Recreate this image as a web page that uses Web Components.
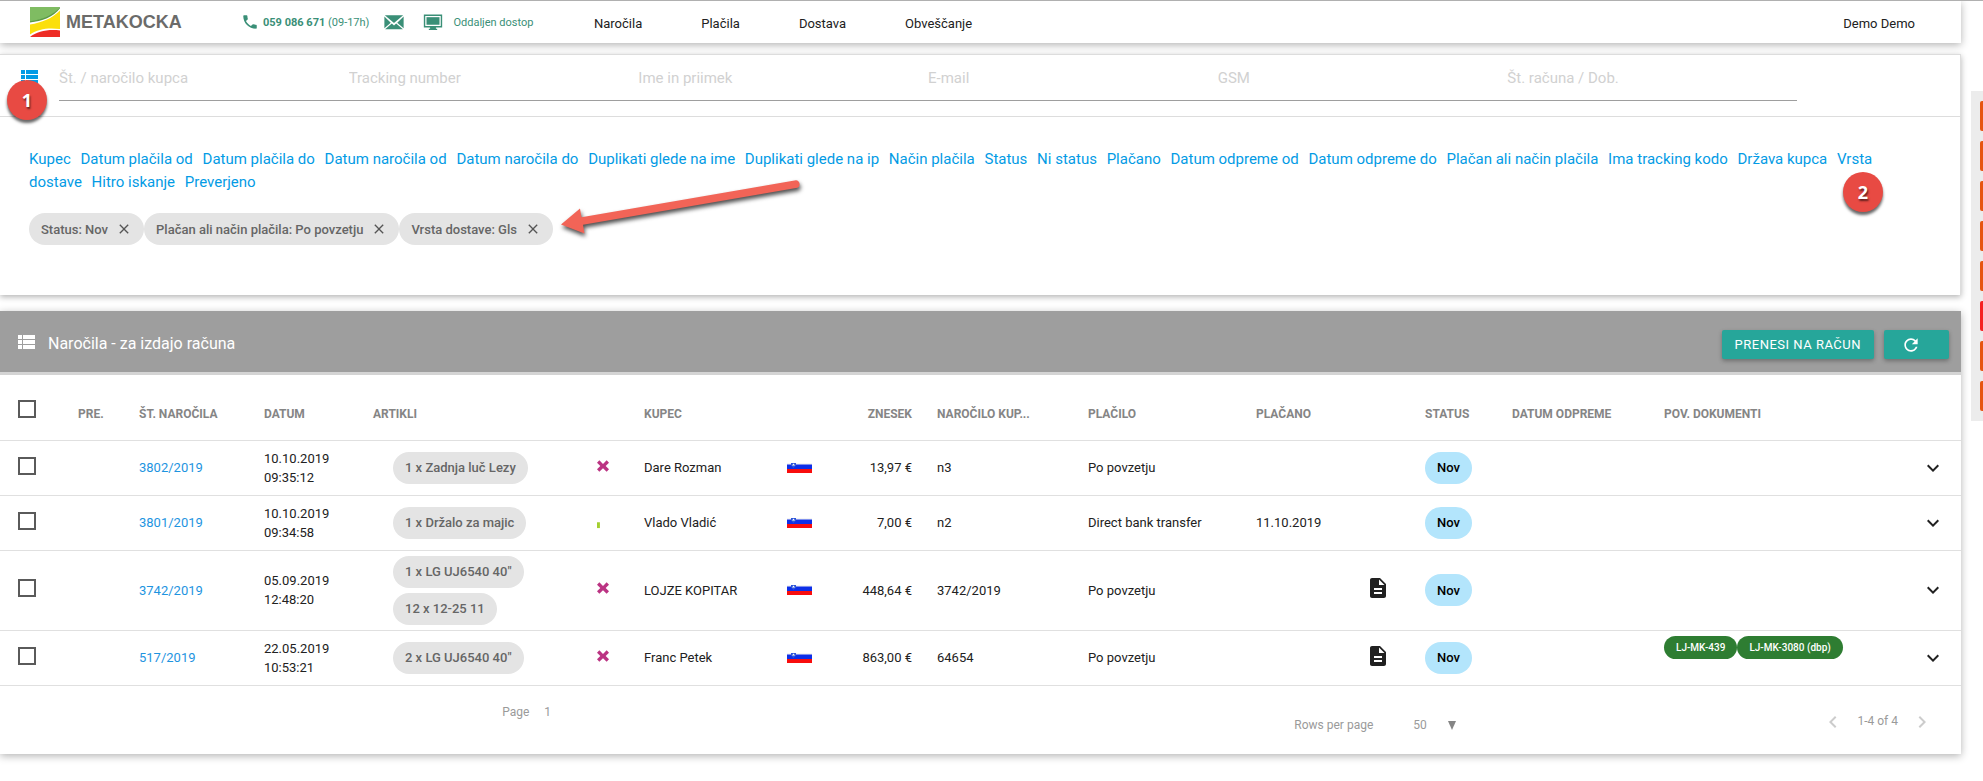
<!DOCTYPE html>
<html lang="sl">
<head>
<meta charset="utf-8">
<title>Metakocka - Naročila</title>
<style>
    body {
        margin: 0;
        background: #fff;
        color: #212121;
        font: 13px/19px Roboto, "Liberation Sans", sans-serif;
    }
</style>
</head>
<body>
<mk-app></mk-app>

<script>
const ICONS = {
    list: '<path d="M4 14h4v-4H4v4zm0 5h4v-4H4v4zM4 9h4V5H4v4zm5 5h12v-4H9v4zm0 5h12v-4H9v4zM9 5v4h12V5H9z"/>',
    phone: '<path d="M6.62 10.79c1.44 2.83 3.76 5.14 6.59 6.59l2.2-2.2c.27-.27.67-.36 1.02-.24 1.12.37 2.33.57 3.57.57.55 0 1 .45 1 1V20c0 .55-.45 1-1 1-9.39 0-17-7.61-17-17 0-.55.45-1 1-1h3.5c.55 0 1 .45 1 1 0 1.25.2 2.45.57 3.57.11.35.03.74-.25 1.02l-2.2 2.2z"/>',
    mail: '<path d="M2 4.500h20L12 13zM1.500 6l7 6.700-7 6zM22.500 6v12.700l-7-6zM9.600 13.700L12 15.800l2.400-2.100 7.300 6.300H2.300z"/>',
    monitor: '<path d="M1 3h22v15.500h-7.500V20H17v1.500H7V20h1.500v-1.500H1zM2.700 4.700v12.100h18.600V4.700z" fill-rule="evenodd"/><path d="M4.200 6.200h15.600v9.100H4.200z"/>',
    close: '<path d="M19 6.410L17.590 5 12 10.590 6.410 5 5 6.410 10.590 12 5 17.590 6.410 19 12 13.410 17.590 19 19 17.590 13.410 12z"/>',
    refresh: '<path d="M17.650 6.350C16.200 4.900 14.210 4 12 4c-4.420 0-7.990 3.580-7.990 8s3.570 8 7.990 8c3.730 0 6.840-2.550 7.730-6h-2.080c-.82 2.330-3.040 4-5.650 4-3.310 0-6-2.690-6-6s2.690-6 6-6c1.660 0 3.140.69 4.220 1.780L13 11h7V4l-2.350 2.350z"/>',
    cross: '<path d="M6.500 3.500L12 9l5.500-5.500L21 7l-5 5 5 5-3.500 3.500-5.500-5.300-5.500 5.300L3 17l5-5-5-5z"/>',
    bar: '<path d="M0 9h5v10H0z"/>',
    document: '<path d="M14 2H6c-1.100 0-1.990.9-1.990 2L4 20c0 1.100.89 2 1.990 2H18c1.100 0 2-.9 2-2V8l-6-6zm2 16H8v-2h8v2zm0-4H8v-2h8v2zm-3-5V3.500L18.500 9H13z"/>',
    down: '<path d="M16.590 8.590L12 13.170 7.410 8.590 6 10l6 6 6-6z"/>',
    left: '<path d="M15.410 7.410L14 6l-6 6 6 6 1.410-1.410L10.830 12z"/>',
    right: '<path d="M10 6L8.590 7.410 13.170 12l-4.580 4.590L10 18l6-6z"/>'
};

const FILTERS = ['Kupec', 'Datum plačila od', 'Datum plačila do', 'Datum naročila od', 'Datum naročila do',
    'Duplikati glede na ime', 'Duplikati glede na ip', 'Način plačila', 'Status', 'Ni status', 'Plačano',
    'Datum odpreme od', 'Datum odpreme do', 'Plačan ali način plačila', 'Ima tracking kodo', 'Država kupca',
    'Vrsta dostave', 'Hitro iskanje', 'Preverjeno'];

const ORDERS = [
    { no: '3802/2019', date: '10.10.2019', time: '09:35:12', items: ['1 x Zadnja luč Lezy'], stock: 'cross',
      buyer: 'Dare Rozman', sum: '13,97 €', ref: 'n3', pay: 'Po povzetju', paid: '', doc: false, links: [] },
    { no: '3801/2019', date: '10.10.2019', time: '09:34:58', items: ['1 x Držalo za majic'], stock: 'bar',
      buyer: 'Vlado Vladić', sum: '7,00 €', ref: 'n2', pay: 'Direct bank transfer', paid: '11.10.2019', doc: false, links: [] },
    { no: '3742/2019', date: '05.09.2019', time: '12:48:20', items: ['1 x LG UJ6540 40"', '12 x 12-25 11'], stock: 'cross',
      buyer: 'LOJZE KOPITAR', sum: '448,64 €', ref: '3742/2019', pay: 'Po povzetju', paid: '', doc: true, links: [] },
    { no: '517/2019', date: '22.05.2019', time: '10:53:21', items: ['2 x LG UJ6540 40"'], stock: 'cross',
      buyer: 'Franc Petek', sum: '863,00 €', ref: '64654', pay: 'Po povzetju', paid: '', doc: true,
      links: ['LJ-MK-439', 'LJ-MK-3080 (dbp)'] }
];

class MkIcon extends HTMLElement {
    connectedCallback() {
        this.attachShadow({ mode: 'open' }).innerHTML = `
            <style>
                :host { display: inline-block; width: 24px; height: 24px; flex: none; }
                svg { display: block; width: 100%; height: 100%; fill: currentColor; }
            </style>
            <svg viewBox="0 0 24 24" aria-hidden="true">${ICONS[this.getAttribute('name')]}</svg>
        `;
    }
}
customElements.define('mk-icon', MkIcon);


class MkChip extends HTMLElement {
    connectedCallback() {
        const closable = this.hasAttribute('closable');
        this.attachShadow({ mode: 'open' }).innerHTML = `
            <style>
                :host {
                    display: inline-flex;
                    align-items: center;
                    gap: 8px;
                    box-sizing: border-box;
                    height: 32px;
                    padding: 0 12px;
                    border-radius: 16px;
                    background: #e4e4e4;
                    color: #666;
                    font-weight: 500;
                    white-space: nowrap;
                }
                :host([kind="status"]) {
                    background: #b3e5fc;
                    color: #000;
                }
                :host([kind="doc"]) {
                    height: 23px;
                    border-radius: 12px;
                    background: #2e7d32;
                    color: #fff;
                    font-size: 10px;
                }
                button {
                    display: flex;
                    padding: 0;
                    border: 0;
                    background: none;
                    color: #555;
                    cursor: pointer;
                }
                mk-icon { width: 16px; height: 16px; }
            </style>
            <slot></slot>
            ${closable ? '<button aria-label="Odstrani"><mk-icon name="close"></mk-icon></button>' : ''}
        `;
        if (closable) {
            this.shadowRoot.querySelector('button').onclick = () => this.remove();
        }
    }
}
customElements.define('mk-chip', MkChip);


class MkTopbar extends HTMLElement {
    connectedCallback() {
        this.attachShadow({ mode: 'open' }).innerHTML = `
            <style>
                :host {
                    display: flex;
                    align-items: center;
                    box-sizing: border-box;
                    height: 42px;
                    padding: 0 46px 0 30px;
                    background: #fff;
                    box-shadow: 0 2px 8px rgba(0, 0, 0, 0.3);
                }
                a { color: inherit; text-decoration: none; }
                .brand {
                    display: flex;
                    align-items: center;
                    gap: 6px;
                    width: 211px;
                    color: #6b6b6a;
                    font: bold 18px/30px "Liberation Sans", sans-serif;
                }
                .brand svg { width: 30px; height: 30px; }
                .contact {
                    display: flex;
                    align-items: center;
                    width: 353px;
                    color: #3a8f77;
                    font-size: 11px;
                }
                .contact a { display: flex; align-items: center; }
                .contact b { font-weight: 700; }
                .phone { gap: 4px; margin-right: 14px; }
                .mail { margin-right: 18px; }
                .remote { gap: 10px; }
                .phone mk-icon { width: 18px; height: 18px; }
                .mail mk-icon { width: 22px; height: 22px; }
                .remote mk-icon { width: 20px; height: 20px; }
                nav { display: flex; flex: 1; gap: 59px; }
                nav, .user { padding-top: 3px; }
            </style>
            <a class="brand" href="#">
                <svg viewBox="0 0 30 30" aria-hidden="true">
                    <path d="M0 0h30C24 9 12 13 0 15z" fill="#7fbc62"/>
                    <path d="M0 14.200C12 12.500 23 8.500 30 0v1.200C23.500 10 12 14 0 15.500z" fill="#5a9a45"/>
                    <path d="M0 17.500c12-2 22-6 30-14v18.500C18 20.500 8 22 0 27.500z" fill="#fbdf0b"/>
                    <path d="M0 30c7-5.500 18-8 30-6.500V30z" fill="#ee2d26"/>
                </svg>
                METAKOCKA
            </a>
            <div class="contact">
                <a class="phone" href="tel:059086671"><mk-icon name="phone"></mk-icon><span><b>059 086 671</b> (09-17h)</span></a>
                <a class="mail" href="#" aria-label="E-pošta"><mk-icon name="mail"></mk-icon></a>
                <a class="remote" href="#"><mk-icon name="monitor"></mk-icon>Oddaljen dostop</a>
            </div>
            <nav>
                <a href="#">Naročila</a>
                <a href="#">Plačila</a>
                <a href="#">Dostava</a>
                <a href="#">Obveščanje</a>
            </nav>
            <a class="user" href="#">Demo Demo</a>
        `;
    }
}
customElements.define('mk-topbar', MkTopbar);


class MkFilter extends HTMLElement {
    connectedCallback() {
        const fields = ['Št. / naročilo kupca', 'Tracking number', 'Ime in priimek', 'E-mail', 'GSM', 'Št. računa / Dob.'];
        this.attachShadow({ mode: 'open' }).innerHTML = `
            <style>
                :host {
                    display: block;
                    box-sizing: border-box;
                    min-height: 241px;
                    border: solid #ddd;
                    border-width: 1px 1px 0 0;
                    background: #fff;
                    box-shadow: 0 2px 6px rgba(0, 0, 0, 0.3);
                }
                form {
                    display: flex;
                    align-items: flex-start;
                    gap: 18px;
                    padding: 10px 163px 15px 17px;
                    border-bottom: 1px solid #ddd;
                    color: #039be5;
                }
                .fields {
                    display: flex;
                    flex: 1;
                    border-bottom: 1px solid #9e9e9e;
                }
                input {
                    flex: 1;
                    min-width: 0;
                    height: 35px;
                    padding: 0 0 10px;
                    box-sizing: border-box;
                    border: 0;
                    outline: 0;
                    background: none;
                    font: 15px Roboto, sans-serif;
                }
                input::placeholder { color: #d1d1d1; }
                .links {
                    padding: 31px 60px 0 29px;
                    font-size: 15px;
                    line-height: 23px;
                }
                .links a {
                    margin-right: 6px;
                    color: #039be5;
                    text-decoration: none;
                }
                .chips {
                    display: flex;
                    padding: 19px 29px;
                }
            </style>
            <form>
                <mk-icon name="list"></mk-icon>
                <div class="fields">
                    ${fields.map(f => `<input type="text" placeholder="${f}" aria-label="${f}">`).join('')}
                </div>
            </form>
            <div class="links">${FILTERS.map(f => `<a href="#">${f}</a>`).join(' ')}</div>
            <div class="chips"><slot></slot></div>
        `;
    }
}
customElements.define('mk-filter', MkFilter);


class MkOrders extends HTMLElement {
    connectedCallback() {
        const rows = ORDERS.map(o => `
            <tr>
                <td class="pick"><input type="checkbox" aria-label="Izberi ${o.no}"></td>
                <td></td>
                <td><a href="#">${o.no}</a></td>
                <td>${o.date}<br>${o.time}</td>
                <td><div class="items">${o.items.map(i => `<mk-chip>${i}</mk-chip>`).join('')}</div></td>
                <td><mk-icon class="${o.stock}" name="${o.stock}"></mk-icon></td>
                <td>${o.buyer}</td>
                <td>
                    <svg class="flag" viewBox="0 0 25 12" role="img" aria-label="Slovenija">
                        <path d="M0 1h25v3H0z" fill="#f4f4f4"/>
                        <path d="M0 2.500h25V7H0z" fill="#0d2fe8"/>
                        <path d="M0 7h25v4H0z" fill="#f80d0d"/>
                        <path d="M4 1h5v2.500L6.500 6 4 3.500z" fill="#2d55d8"/>
                        <path d="M5 3.500l1.500-2L8 3.500z" fill="#fff"/>
                    </svg>
                </td>
                <td class="sum">${o.sum}</td>
                <td>${o.ref}</td>
                <td>${o.pay}</td>
                <td>${o.paid}</td>
                <td>${o.doc ? '<mk-icon class="doc" name="document"></mk-icon>' : ''}</td>
                <td><mk-chip kind="status">Nov</mk-chip></td>
                <td></td>
                <td class="links"><div>${o.links.map(l => `<mk-chip kind="doc">${l}</mk-chip>`).join('')}</div></td>
                <td><button class="more" aria-label="Več"><mk-icon name="down"></mk-icon></button></td>
            </tr>
        `).join('');

        const widths = [78, 61, 125, 109, 224, 47, 143, 53, 97, 151, 168, 114, 55, 87, 152, 257, 40];
        const heads = ['PRE.', 'ŠT. NAROČILA', 'DATUM', 'ARTIKLI', '', 'KUPEC', '', 'ZNESEK', 'NAROČILO KUP...',
            'PLAČILO', 'PLAČANO', '', 'STATUS', 'DATUM ODPREME', 'POV. DOKUMENTI', ''];

        this.attachShadow({ mode: 'open' }).innerHTML = `
            <style>
                :host {
                    display: block;
                    background: #fff;
                    box-shadow: 0 2px 8px rgba(0, 0, 0, 0.3);
                }
                header {
                    display: flex;
                    align-items: center;
                    gap: 10px;
                    height: 61px;
                    padding: 0 12px 0 14px;
                    border-bottom: 3px solid #d4d4d4;
                    background: #9e9e9e;
                    color: #fff;
                }
                h1 {
                    flex: 1;
                    margin: 0;
                    padding-top: 3px;
                    font-size: 16px;
                    font-weight: 400;
                }
                header button {
                    display: flex;
                    align-items: center;
                    height: 29px;
                    margin-top: 6px;
                    padding: 0 13px;
                    border: 0;
                    border-radius: 2px;
                    background: #26a69a;
                    box-shadow: 0 2px 4px rgba(0, 0, 0, 0.3);
                    color: #fff;
                    font: 13px Roboto, sans-serif;
                    letter-spacing: 0.5px;
                    cursor: pointer;
                }
                header .refresh { padding: 0 28px 0 17px; }
                .refresh mk-icon { width: 20px; height: 20px; }
                table {
                    width: 100%;
                    table-layout: fixed;
                    border-collapse: collapse;
                }
                th, td { box-sizing: border-box; }
                th {
                    height: 65px;
                    padding: 14px 0 0;
                    color: #858585;
                    font-size: 12px;
                    font-weight: 700;
                    text-align: left;
                    white-space: nowrap;
                }
                td {
                    height: 55px;
                    padding: 0;
                }
                tr { border-bottom: 1px solid #e0e0e0; }
                td a { color: #1e94df; text-decoration: none; }
                th.pick { padding: 4px 0 0 18px; }
                td.pick { padding: 0 0 4px 18px; }
                input[type="checkbox"] {
                    display: block;
                    appearance: none;
                    width: 18px;
                    height: 18px;
                    margin: 0;
                    border: 2px solid #5a5a5a;
                }
                input[type="checkbox"]:checked { background: #26a69a; }
                .sum { padding-right: 25px; text-align: right; }
                .items {
                    display: flex;
                    flex-direction: column;
                    align-items: flex-start;
                    gap: 5px;
                    padding: 5px 0 5px 20px;
                }
                td mk-icon, td mk-chip { vertical-align: middle; }
                .cross { width: 16px; height: 16px; margin: 0 0 4px -2px; color: #bb3483; }
                .bar { width: 14px; height: 14px; color: #a4cf30; }
                .flag { display: block; width: 25px; height: 12px; }
                .doc { margin: 0 0 4px -4px; }
                .links { vertical-align: top; }
                .links div { display: flex; padding-top: 5px; }
                .more {
                    display: flex;
                    padding: 0;
                    border: 0;
                    background: none;
                    color: #212121;
                    cursor: pointer;
                }
                footer {
                    display: grid;
                    grid-template-columns: 502fr 792fr 527fr auto;
                    align-items: center;
                    height: 68px;
                    padding-right: 27px;
                    color: #9a9a9a;
                    font-size: 12px;
                }
                footer div, footer label { display: flex; align-items: center; }
                footer select, footer input {
                    padding: 0;
                    border: 0;
                    appearance: none;
                    background: none;
                    color: inherit;
                    font: inherit;
                }
                .page { grid-column: 2; gap: 15px; padding-bottom: 14px; }
                .page input { width: 24px; }
                .size { gap: 40px; padding-top: 12px; }
                .size span { display: flex; align-items: center; }
                .size select { width: 43px; margin-right: -8px; padding-right: 22px; }
                .size i {
                    border: solid transparent;
                    border-width: 9px 4px 0;
                    border-top-color: #858585;
                    pointer-events: none;
                }
                .range { gap: 12px; padding-top: 4px; }
                .range button { display: flex; padding: 0; border: 0; background: none; color: #ccc; }
            </style>
            <header>
                <mk-icon name="list"></mk-icon>
                <h1>Naročila - za izdajo računa</h1>
                <button>PRENESI NA RAČUN</button>
                <button class="refresh" aria-label="Osveži"><mk-icon name="refresh"></mk-icon></button>
            </header>
            <table>
                <colgroup>${widths.map(w => `<col style="width: ${w}px">`).join('')}</colgroup>
                <thead>
                    <tr>
                        <th class="pick"><input type="checkbox" aria-label="Izberi vse"></th>
                        ${heads.map(h => `<th${h === 'ZNESEK' ? ' class="sum"' : ''}>${h}</th>`).join('')}
                    </tr>
                </thead>
                <tbody>${rows}</tbody>
            </table>
            <footer>
                <label class="page">Page <input type="text" value="1"></label>
                <label class="size">Rows per page <span><select><option>50</option></select><i></i></span></label>
                <div class="range">
                    <button aria-label="Nazaj"><mk-icon name="left"></mk-icon></button>
                    <span>1-4 of 4</span>
                    <button aria-label="Naprej"><mk-icon name="right"></mk-icon></button>
                </div>
            </footer>
        `;
    }
}
customElements.define('mk-orders', MkOrders);


// Colored tabs cut off by the right edge of the window
class MkRail extends HTMLElement {
    connectedCallback() {
        const colors = ['#e65512', '#e65512', '#e65512', '#e65512', '#e65512', '#f52222', '#e65512', '#e65512'];
        this.attachShadow({ mode: 'open' }).innerHTML = `
            <style>
                :host {
                    display: flex;
                    flex-direction: column;
                    align-self: flex-start;
                    gap: 10px;
                    width: 3px;
                    margin-top: 90px;
                    padding: 10px 0 10px 9px;
                    background: #ececec;
                }
                button {
                    height: 30px;
                    padding: 0;
                    border: 0;
                    border-radius: 2px 0 0 2px;
                }
            </style>
            ${colors.map((c, i) => `<button style="background: ${c}" aria-label="Zavihek ${i + 1}"></button>`).join('')}
        `;
    }
}
customElements.define('mk-rail', MkRail);


class MkMarker extends HTMLElement {
    connectedCallback() {
        this.attachShadow({ mode: 'open' }).innerHTML = `
            <style>
                :host {
                    position: absolute;
                    width: 40px;
                    height: 40px;
                    border-radius: 50%;
                    background: #e84a43;
                    box-shadow: 0 3px 3px rgba(0, 0, 0, 0.6);
                    color: #fff;
                    font: bold 18px/40px "Open Sans", sans-serif;
                    text-align: center;
                    text-shadow: 1px 2px 2px rgba(0, 0, 0, 0.6);
                }
            </style>
            <slot></slot>
        `;
    }
}
customElements.define('mk-marker', MkMarker);


class MkApp extends HTMLElement {
    connectedCallback() {
        this.attachShadow({ mode: 'open' }).innerHTML = `
            <style>
                :host {
                    display: flex;
                    gap: 10px;
                    position: relative;
                    border-top: 1px solid #b0b0b0;
                    overflow: hidden;
                    padding-bottom: 24px;
                }
                main {
                    flex: 1;
                    min-width: 0;
                    display: flex;
                    flex-direction: column;
                }
                mk-filter { margin: 11px 0 16px; }
                .first { left: 7px; top: 79px; }
                .second { right: 100px; top: 171px; }
                .arrow {
                    position: absolute;
                    left: 555px;
                    top: 174px;
                    width: 250px;
                    height: 70px;
                    filter: drop-shadow(1px 3px 2px rgba(0, 0, 0, 0.7));
                }
            </style>
            <main>
                <mk-topbar></mk-topbar>
                <mk-filter>
                    <mk-chip closable>Status: Nov</mk-chip>
                    <mk-chip closable>Plačan ali način plačila: Po povzetju</mk-chip>
                    <mk-chip closable>Vrsta dostave: Gls</mk-chip>
                </mk-filter>
                <mk-orders></mk-orders>
            </main>
            <mk-rail></mk-rail>
            <svg class="arrow" viewBox="0 0 250 70" aria-hidden="true">
                <path d="M6 49.500L25 33.500 26.500 42.300 241 5.300A4 4 0 0 1 242.500 12.800L28 49.800 29.500 58.500z" fill="#f26457"/>
            </svg>
            <mk-marker class="first">1</mk-marker>
            <mk-marker class="second">2</mk-marker>
        `;
    }
}
customElements.define('mk-app', MkApp);
</script>
</body>
</html>
